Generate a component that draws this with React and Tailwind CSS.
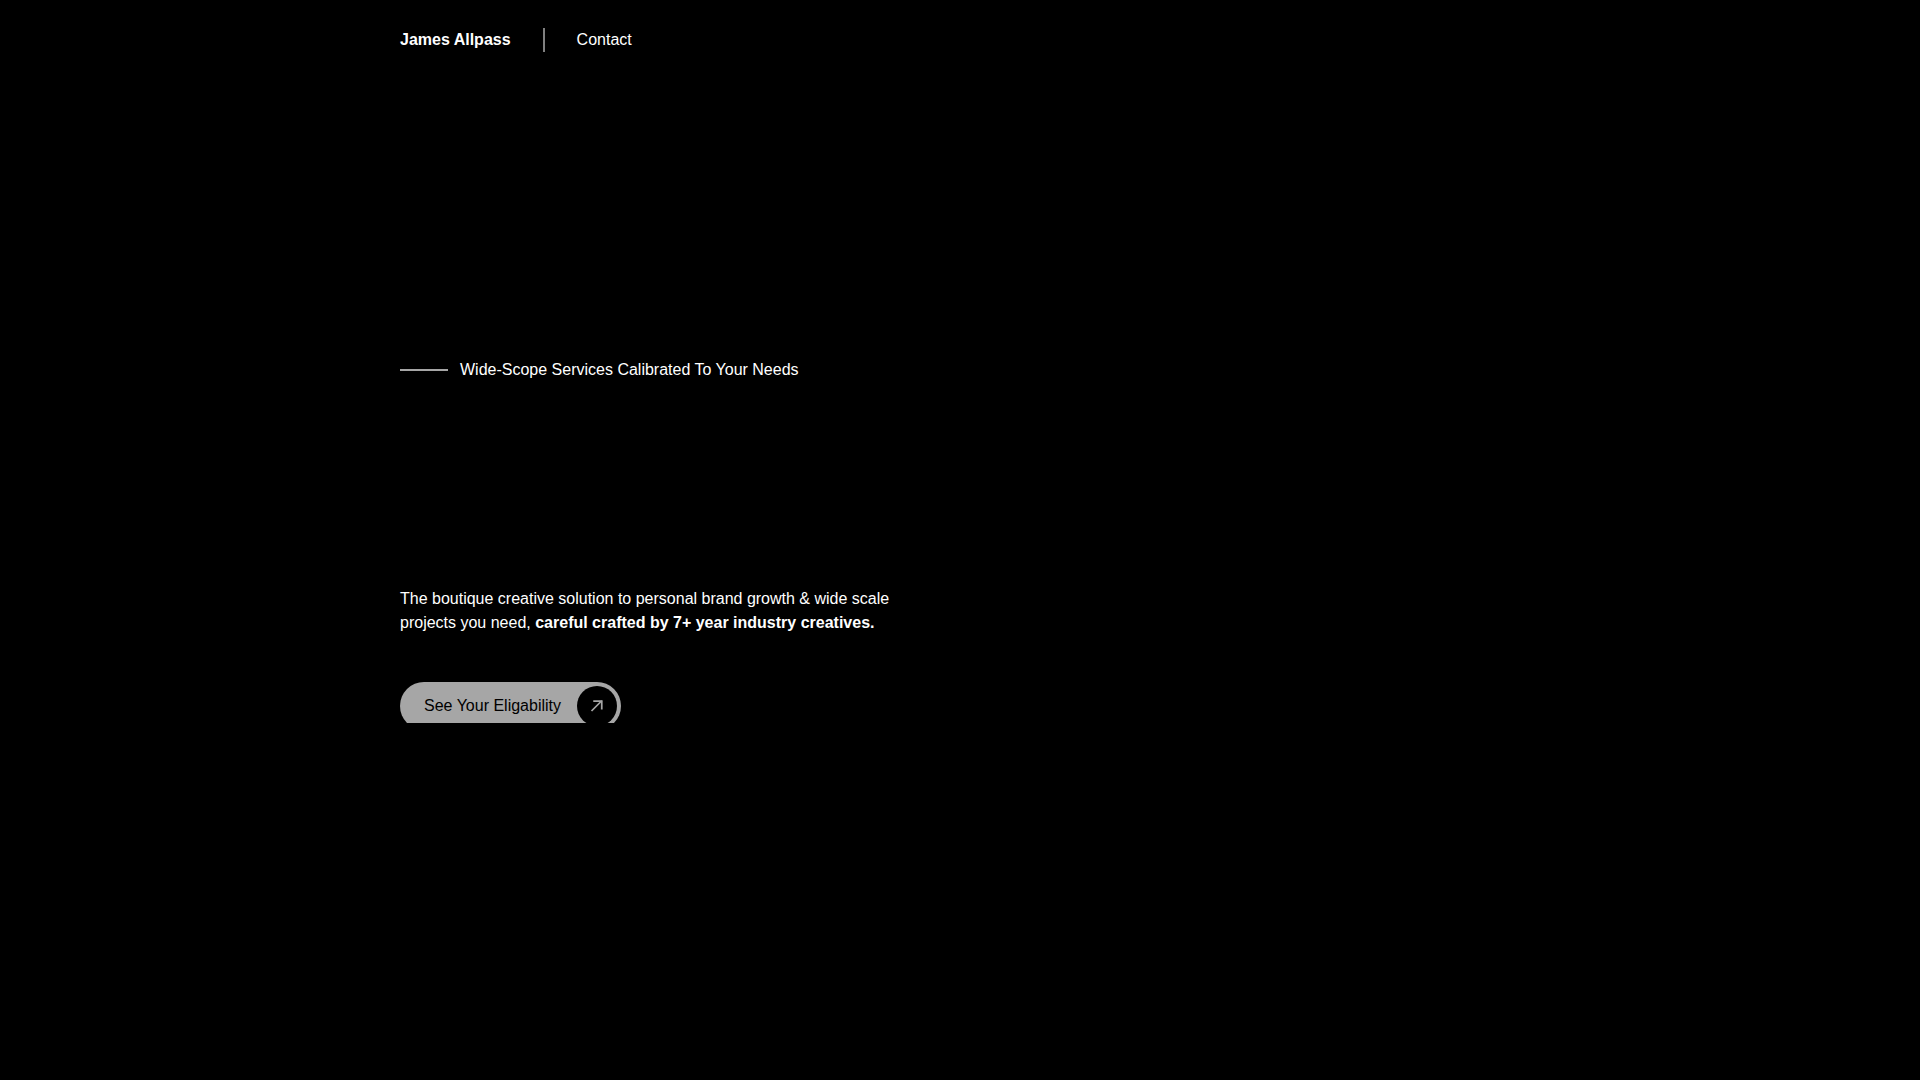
import React from 'react';

function ArrowIcon() {
  return (
    <svg
      viewBox="0 0 24 24"
      fill="none"
      stroke="currentColor"
      strokeWidth="1.75"
      className="h-6 w-6"
      aria-hidden="true"
    >
      <path d="M6.5 17 16.75 6.75" />
      <path d="M8.25 7H16.75V15.5" />
    </svg>
  );
}

function Header() {
  return (
    <header className="w-full max-w-[1120px] mx-auto py-7">
      <nav className="flex items-center gap-8">
        <a href="#home" className="font-bold">
          James Allpass
        </a>
        <span className="w-0.5 h-6 bg-[#808080]" />
        <a href="#contact">Contact</a>
      </nav>
    </header>
  );
}

function Hero() {
  return (
    <section className="w-full max-w-[1120px] mx-auto">
      {/* Tagline */}
      <div className="mt-[278px] flex items-center gap-3">
        <span className="w-12 h-0.5 bg-[#a6a6a6]" />
        <p>Wide-Scope Services Calibrated To Your Needs</p>
      </div>

      {/* Intro */}
      <p className="mt-[205px] max-w-[500px]">
        The boutique creative solution to personal brand growth &amp; wide scale projects you need,{' '}
        <strong className="font-bold">careful crafted by 7+ year industry creatives.</strong>
      </p>

      {/* CTA, cut off by the section edge */}
      <div className="mt-[47px] h-[41px] overflow-hidden">
        <button
          type="button"
          className="flex items-center gap-4 h-12 pl-6 pr-1 rounded-full bg-[#a6a6a6] text-black"
        >
          See Your Eligability
          <span className="flex items-center justify-center w-10 h-10 rounded-full bg-black text-[#a6a6a6]">
            <ArrowIcon />
          </span>
        </button>
      </div>
    </section>
  );
}

export default function App() {
  return (
    <main className="min-h-screen bg-black px-6 text-base text-white font-['Liberation_Sans',Arial,sans-serif]">
      <Header />
      <Hero />
    </main>
  );
}
